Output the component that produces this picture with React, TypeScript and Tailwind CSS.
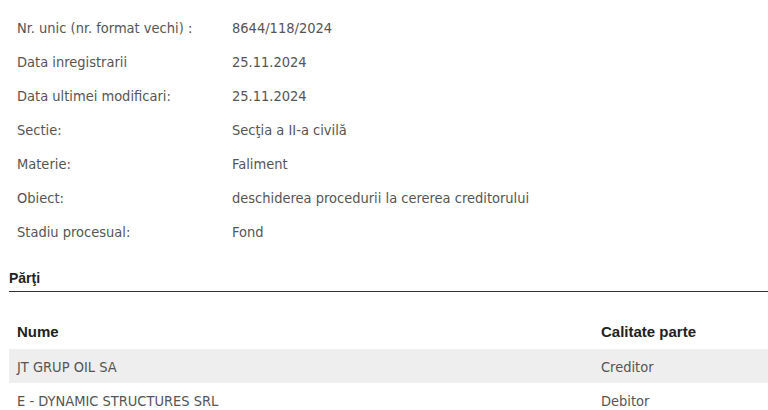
import React from "react";

const rows: [string, string][] = [
  ["Nr. unic (nr. format vechi) :", "8644/118/2024"],
  ["Data inregistrarii", "25.11.2024"],
  ["Data ultimei modificari:", "25.11.2024"],
  ["Sectie:", "Secţia a II-a civilă"],
  ["Materie:", "Faliment"],
  ["Obiect:", "deschiderea procedurii la cererea creditorului"],
  ["Stadiu procesual:", "Fond"],
];

const parti: [string, string][] = [
  ["JT GRUP OIL SA", "Creditor"],
  ["E - DYNAMIC STRUCTURES SRL", "Debitor"],
];

export default function App() {
  const body = { fontFamily: '"DejaVu Sans Condensed", "DejaVu Sans", sans-serif' };
  const bold = { fontFamily: '"Liberation Sans", Arial, sans-serif' };
  return (
    <div className="w-[768px] h-[410px] overflow-hidden bg-white">
      <div className="pt-[11px]">
        {rows.map(([k, v]) => (
          <div key={k} className="flex h-[34px] items-center pt-[2px] text-[14.5px] text-[#555]" style={body}>
            <div className="w-[232px] shrink-0 pl-[17px]">{k}</div>
            <div>{v}</div>
          </div>
        ))}
      </div>
      <div className="ml-[9px] mt-[19px]">
        <div className="border-b border-[#333] pb-[2px] text-[14px] font-bold text-[#222]" style={bold}>
          Părţi
        </div>
        <div className="mt-[23px]">
          <div className="flex h-[34px] items-center text-[15px] font-bold text-[#222]" style={bold}>
            <div className="w-[592px] shrink-0 pl-[8px]">Nume</div>
            <div>Calitate parte</div>
          </div>
          {parti.map(([n, c], i) => (
            <div
              key={n}
              className={`flex h-[34px] items-center pt-[3px] text-[14.5px] text-[#555] ${i === 0 ? "bg-[#eeeeee]" : "bg-white"}`}
              style={body}
            >
              <div className="w-[592px] shrink-0 pl-[8px]">{n}</div>
              <div>{c}</div>
            </div>
          ))}
        </div>
      </div>
    </div>
  );
}
